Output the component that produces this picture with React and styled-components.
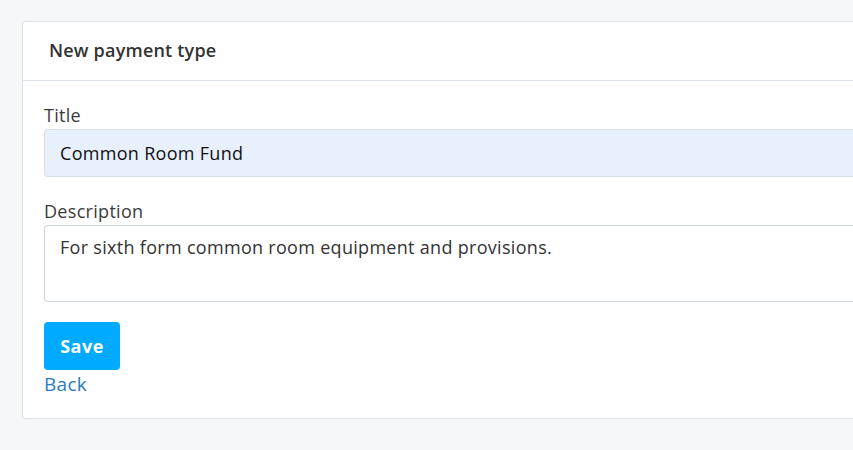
import React from "react";
import styled, { createGlobalStyle } from "styled-components";

const Global = createGlobalStyle`
  html, body { margin: 0; padding: 0; background: #f6f7f9; }
  body { font-family: "Open Sans", "Liberation Sans", sans-serif; color: #3b3b3b; letter-spacing: 0.3px; }
  * { box-sizing: border-box; }
`;

const Page = styled.div`
  padding: 21px 0 32px 22px;
  display: flex;
`;

const Card = styled.div`
  flex: 1;
  background: #fff;
  border: 1px solid #dde3ea;
  border-right: none;
  border-radius: 4px 0 0 4px;
`;

const Header = styled.div`
  height: 59px;
  padding: 0 26px 2px;
  display: flex;
  align-items: center;
  border-bottom: 1px solid #dde3ea;
  font-size: 18px;
  font-weight: 600;
  letter-spacing: 0.2px;
  color: #333;
`;

const Body = styled.div`
  padding: 20px 0 20px 21px;
  display: flex;
  flex-direction: column;
`;

const Label = styled.label`
  font-size: 18px;
  line-height: 28px;
  color: #3b3b3b;
  margin-top: ${(p) => p.$mt || 0}px;
`;

const Input = styled.div`
  height: 48px;
  padding: 0 15px 1px;
  display: flex;
  align-items: center;
  background: #e8f0fe;
  border: 1px solid #d6dee8;
  border-right: none;
  border-radius: 4px 0 0 4px;
  font-size: 18px;
  color: #111;
`;

const TextArea = styled.div`
  height: 77px;
  padding: 9px 15px;
  border: 1px solid #ccd4de;
  border-right: none;
  border-radius: 4px 0 0 4px;
  font-size: 18px;
  color: #333;
`;

const SaveButton = styled.button`
  align-self: flex-start;
  margin-top: 20px;
  width: 76px;
  height: 48px;
  border: none;
  border-radius: 4px;
  background: #00aaff;
  color: #fff;
  font-family: inherit;
  font-size: 18px;
  font-weight: 700;
  letter-spacing: 0.5px;
`;

const BackLink = styled.a`
  align-self: flex-start;
  font-size: 19px;
  line-height: 28px;
  color: #2b7bc0;
  text-decoration: none;
`;

export default function App() {
  return (
    <>
      <Global />
      <Page>
        <Card>
          <Header>New payment type</Header>
          <Body>
            <Label>Title</Label>
            <Input>Common Room Fund</Input>
            <Label $mt={20}>Description</Label>
            <TextArea>For sixth form common room equipment and provisions.</TextArea>
            <SaveButton>Save</SaveButton>
            <BackLink href="#">Back</BackLink>
          </Body>
        </Card>
      </Page>
    </>
  );
}
